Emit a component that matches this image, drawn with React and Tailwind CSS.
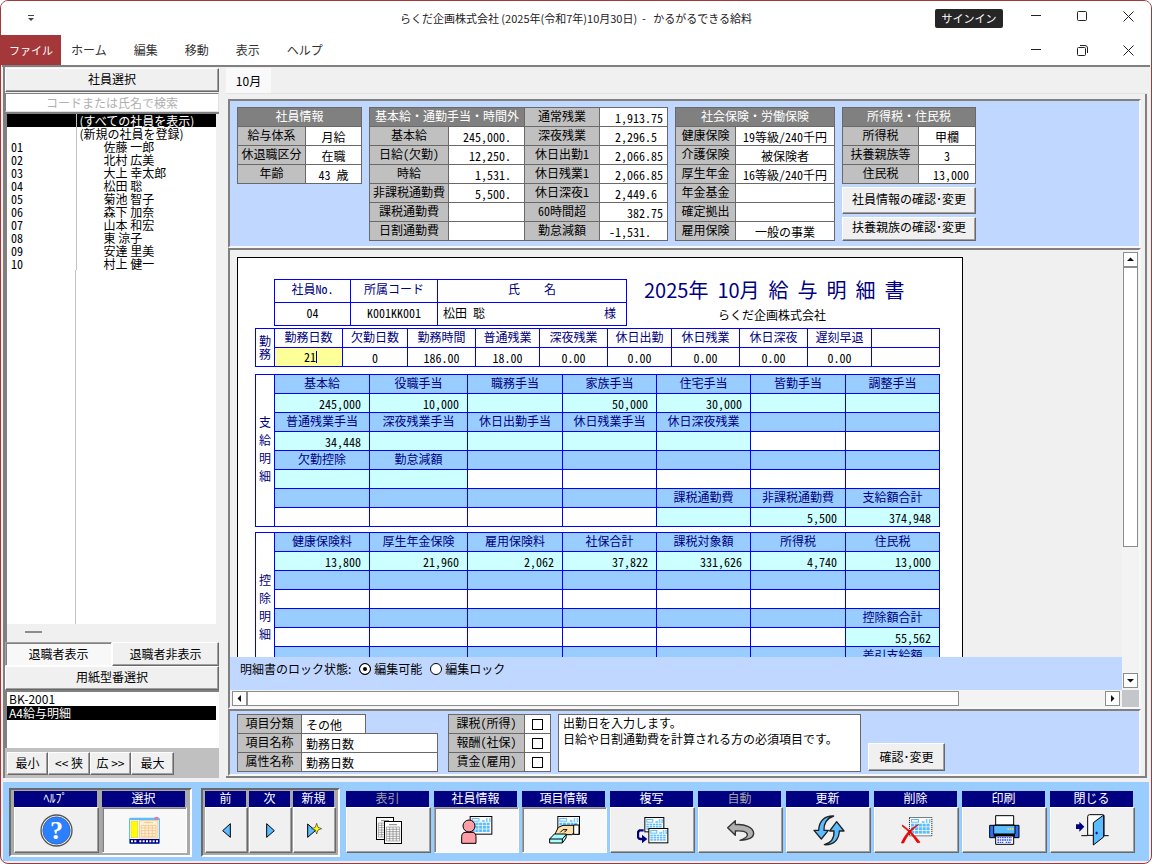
import { useState } from 'react';
import clsx from 'clsx';

/* ─── Shared edge styles ─────────────────────────────── */
const RAISED =
  'border border-t-white border-l-white border-b-[#696969] border-r-[#696969] shadow-[inset_-1px_-1px_0_#a0a0a0] bg-[#f0f0f0]';
const PRESSED =
  'border border-t-[#a0a0a0] border-l-[#a0a0a0] border-b-white border-r-white shadow-[inset_1px_1px_0_#808080] bg-[#f8f8f8]';
const SUNKEN =
  'border-2 border-t-[#808080] border-l-[#808080] border-b-[#f8f8f8] border-r-[#f8f8f8]';
const NUM = "font-['Noto_Sans_Mono_CJK_JP','Noto_Sans_CJK_JP',monospace] text-xs";

/* ─── Data ───────────────────────────────────────────── */
const menus = ['ホーム', '編集', '移動', '表示', 'ヘルプ'];

const employees = [
  ['01', '佐藤 一郎'],
  ['02', '北村 広美'],
  ['03', '大上 幸太郎'],
  ['04', '松田 聡'],
  ['05', '菊池 智子'],
  ['06', '森下 加奈'],
  ['07', '山本 和宏'],
  ['08', '東 涼子'],
  ['09', '安達 里美'],
  ['10', '村上 健一'],
];

const baseRows = [
  ['基本給', '245,000.', '深夜残業', '2,296.5', 'pr-2.5'],
  ['日給(欠勤)', '12,250.', '休日出勤1', '2,066.85', 'pr-1'],
  ['時給', '1,531.', '休日残業1', '2,066.85', 'pr-1'],
  ['非課税通勤費', '5,500.', '休日深夜1', '2,449.6', 'pr-2.5'],
  ['課税通勤費', '', '60時間超', '382.75', 'pr-1'],
  ['日割通勤費', '', '勤怠減額', '-1,531.', 'pr-4'],
];

const insuranceRows = [
  ['健康保険', '19等級/240千円'],
  ['介護保険', '被保険者'],
  ['厚生年金', '16等級/240千円'],
  ['年金基金', ''],
  ['確定拠出', ''],
  ['雇用保険', '一般の事業'],
];

const attendance = [
  ['勤務日数', '21'],
  ['欠勤日数', '0'],
  ['勤務時間', '186.00'],
  ['普通残業', '18.00'],
  ['深夜残業', '0.00'],
  ['休日出勤', '0.00'],
  ['休日残業', '0.00'],
  ['休日深夜', '0.00'],
  ['遅刻早退', '0.00'],
  ['', ''],
];

// fill: c = calculated cell, - = plain cell
const payments = [
  {
    heads: ['基本給', '役職手当', '職務手当', '家族手当', '住宅手当', '皆勤手当', '調整手当'],
    values: ['245,000', '10,000', '', '50,000', '30,000', '', ''],
    fill: 'ccccccc',
  },
  {
    heads: ['普通残業手当', '深夜残業手当', '休日出勤手当', '休日残業手当', '休日深夜残業', '', ''],
    values: ['34,448', '', '', '', '', '', ''],
    fill: 'ccccc--',
  },
  {
    heads: ['欠勤控除', '勤怠減額', '', '', '', '', ''],
    values: ['', '', '', '', '', '', ''],
    fill: 'cc-----',
  },
  {
    heads: ['', '', '', '', '課税通勤費', '非課税通勤費', '支給額合計'],
    values: ['', '', '', '', '', '5,500', '374,948'],
    fill: '----ccc',
  },
];

const deductions = [
  {
    heads: ['健康保険料', '厚生年金保険', '雇用保険料', '社保合計', '課税対象額', '所得税', '住民税'],
    values: ['13,800', '21,960', '2,062', '37,822', '331,626', '4,740', '13,000'],
    fill: 'ccccccc',
  },
  {
    heads: ['', '', '', '', '', '', ''],
    values: ['', '', '', '', '', '', ''],
    fill: '-------',
  },
  {
    heads: ['', '', '', '', '', '', '控除額合計'],
    values: ['', '', '', '', '', '', '55,562'],
    fill: '------c',
  },
  {
    heads: ['', '', '', '', '', '', '差引支給額'],
    values: ['', '', '', '', '', '', ''],
    fill: '------c',
  },
];

/* ─── Icons ──────────────────────────────────────────── */
function Sheet({ x = 0, y = 0, w = 68, h = 56, dashed = false }) {
  const cols = [0, 1, 2, 3, 4];
  const rows = [0, 1, 2];
  const cw = (w - 12) / 5;
  const ch = (h - 26) / 3;
  return (
    <g transform={`translate(${x} ${y})`}>
      <rect x="1.5" y="1.5" width={w - 3} height={h - 3} fill="#fff" stroke="#000" strokeWidth="3" strokeDasharray={dashed ? '3 3' : undefined} />
      <rect x="7.5" y="7.5" width={w * 0.3} height="8" fill="#fff" stroke="#5bbcff" strokeWidth="3" />
      <path d={`M${w * 0.55} 15h8M${w * 0.72} 9h5M${w * 0.72} 15h5M${w * 0.85} 9h5M${w * 0.85} 15h5`} stroke="#5bbcff" strokeWidth="4" />
      {rows.map((r) =>
        cols.map((c) => (
          <rect key={`${r}-${c}`} x={6 + c * cw} y={20 + r * ch} width={cw - 2} height={ch - 2} fill="#5bbcff" />
        ))
      )}
    </g>
  );
}

function HelpIcon() {
  return (
    <svg width="33" height="33" viewBox="0 0 96 96" aria-hidden="true">
      <circle cx="48" cy="48" r="45" fill="#fff" stroke="#555" strokeWidth="4" />
      <circle cx="48" cy="48" r="40" fill="#2a80ff" stroke="#3a5a90" strokeWidth="2" />
      <text x="48" y="74" textAnchor="middle" fontFamily="Liberation Serif" fontWeight="bold" fontSize="76" fill="#fff">
        ?
      </text>
    </svg>
  );
}

function SelectIcon() {
  return (
    <svg width="31" height="27" viewBox="0 0 93 81" aria-hidden="true">
      <rect x="0" y="2" width="93" height="79" rx="5" fill="#5bbcff" />
      <rect x="77" y="0" width="11" height="7" fill="#ff6f91" />
      <rect x="3" y="9" width="87" height="57" fill="#fff" />
      <rect x="6" y="12" width="20" height="50" fill="#ff0" stroke="#f0c860" strokeWidth="2" />
      <rect x="31" y="11" width="56" height="52" fill="#fff3e0" stroke="#f0c890" strokeWidth="3" />
      <path d="M46 17h26" stroke="#f5c58a" strokeWidth="3" />
      <path d="M37 25h44v33H37zM37 33h44M37 41h44M37 50h44M48 25v33M59 25v33M70 25v33" fill="none" stroke="#f7c98f" strokeWidth="3" />
      <rect x="2" y="66" width="89" height="14" fill="#000080" />
      <path d="M6 73h17M31 73h57" stroke="#fff" strokeWidth="6" strokeDasharray="6 4" />
    </svg>
  );
}

function PrevIcon() {
  return (
    <svg width="9" height="15" viewBox="0 0 27 45" aria-hidden="true">
      <path d="M25 2v41L2 23z" fill="#5bbcff" stroke="#000" strokeWidth="3" />
    </svg>
  );
}

function NextIcon() {
  return (
    <svg width="9" height="15" viewBox="0 0 27 45" aria-hidden="true">
      <path d="M2 2v41l23-20z" fill="#5bbcff" stroke="#000" strokeWidth="3" />
    </svg>
  );
}

function NewIcon() {
  return (
    <svg width="15" height="15" viewBox="0 0 45 45" aria-hidden="true">
      <path d="M2 3v40l23-20z" fill="#5bbcff" stroke="#000" strokeWidth="3" />
      <path d="M29 1l4 12 11 4-11 4-4 12-4-12-11-4 11-4z" fill="#ff0" stroke="#333" strokeWidth="2" />
    </svg>
  );
}

function TableIcon() {
  const page = (x, y) => (
    <g transform={`translate(${x} ${y})`}>
      <rect x="1.5" y="1.5" width="51" height="66" fill="#fff" stroke="#000" strokeWidth="3" />
      <path d="M15 11h24" stroke="#808080" strokeWidth="3" />
      <path d="M7 18h40v42H7zM7 25h40M7 32h40M7 39h40M7 46h40M7 53h40M17 18v42M27 18v42M37 18v42" fill="none" stroke="#808080" strokeWidth="2" />
    </g>
  );
  return (
    <svg width="26" height="27" viewBox="0 0 78 81" aria-hidden="true">
      {page(0, 0)}
      {page(24, 12)}
    </svg>
  );
}

function EmployeeIcon() {
  return (
    <svg width="32" height="28" viewBox="0 0 96 84" aria-hidden="true">
      <Sheet x={26} />
      <circle cx="24" cy="30" r="18" fill="#ff9da6" stroke="#000" strokeWidth="3" />
      <path d="M2 82V62q0-13 13-13h18q12 0 12 13v20z" fill="#ff9da6" stroke="#000" strokeWidth="3" />
    </svg>
  );
}

function ItemIcon() {
  return (
    <svg width="32" height="28" viewBox="0 0 96 84" aria-hidden="true">
      <Sheet x={25} />
      <path d="M20 50l8-16 14-6h34v22l-8 6H18z" fill="#ffdfa8" stroke="#000" strokeWidth="3" />
      <path d="M34 49l8-8h12l-8 8" fill="none" stroke="#000" strokeWidth="3" />
      <path d="M74 27h16v28H74z" fill="#fff" stroke="#000" strokeWidth="3" />
      <path d="M2 69l14-15h36l-1 12-11 15H2z" fill="#aff" stroke="#000" strokeWidth="3" />
      <path d="M2 69h38v12M40 69l12-14" fill="none" stroke="#000" strokeWidth="3" />
    </svg>
  );
}

function CopyIcon() {
  return (
    <svg width="32" height="27" viewBox="0 0 96 81" aria-hidden="true">
      <Sheet x={22} w={60} h={46} />
      <Sheet x={34} y={33} w={60} h={46} />
      <path d="M20 40H8q-5 2-5 9v11q1 6 7 6h6" fill="none" stroke="#000080" strokeWidth="7" />
      <path d="M15 53l16 13-16 13z" fill="#000080" />
    </svg>
  );
}

function UndoIcon() {
  return (
    <svg width="28" height="21" viewBox="0 0 84 63" aria-hidden="true">
      <path d="M2 23L25 2v12c28-3 54 8 55 26 0 13-17 20-41 21 14-5 23-10 22-17-1-9-17-13-36-11v13z" fill="#b0b0b0" stroke="#333" strokeWidth="4" strokeLinejoin="round" />
    </svg>
  );
}

function RefreshIcon() {
  return (
    <svg width="32" height="31" viewBox="0 0 96 93" aria-hidden="true">
      <path d="M62 3C35 2 18 17 17 46H3l22 26 21-26H33C32 25 42 10 62 3z" fill="#5bbcff" stroke="#222" strokeWidth="4" strokeLinejoin="round" />
      <path d="M34 89c27 2 44-14 45-41h14L71 20 50 48h13c1 20-9 36-29 41z" fill="#5bbcff" stroke="#222" strokeWidth="4" strokeLinejoin="round" />
    </svg>
  );
}

function DeleteIcon() {
  return (
    <svg width="32" height="27" viewBox="0 0 96 81" aria-hidden="true">
      <Sheet x={24} w={70} h={58} dashed />
      <path d="M4 24c19 13 38 31 53 52l-8 1C36 57 21 40 4 28zM53 23C35 35 19 54 8 78H1C11 54 29 32 53 23z" fill="#f00" stroke="#d00000" strokeWidth="2" strokeLinejoin="round" />
    </svg>
  );
}

function PrintIcon() {
  return (
    <svg width="31" height="30" viewBox="0 0 93 90" aria-hidden="true">
      <path d="M20 2h54v28H20z" fill="#fff" stroke="#000" strokeWidth="3" />
      <path d="M2 31h88v37H2z" fill="#2a6fff" stroke="#000" strokeWidth="3" />
      <path d="M14 31h64v26H14z" fill="#5bbcff" stroke="#000" strokeWidth="3" />
      <path d="M55 42h19" stroke="#ffe04a" strokeWidth="5" strokeDasharray="5 2" />
      <path d="M14 57h64v8H14z" fill="#000" />
      <path d="M20 63h54v25H20z" fill="#fff" stroke="#000" strokeWidth="3" />
      <path d="M25 68h44M25 75h44M25 82h18M50 82h16" stroke="#2a50ff" strokeWidth="4" strokeDasharray="5 2" />
    </svg>
  );
}

function CloseDoorIcon() {
  return (
    <svg width="33" height="32" viewBox="0 0 99 96" aria-hidden="true">
      <path d="M16 65h18M84 65h14" stroke="#000" strokeWidth="3" />
      <path d="M35 65V8q0-6 6-6h38q5 0 5 4v58H35z" fill="#fff" stroke="#000" strokeWidth="3" />
      <path d="M52 26L83 3v66L52 93z" fill="#5bbcff" stroke="#000" strokeWidth="3" />
      <path d="M58 57h8M62 53v8" stroke="#000080" strokeWidth="3" />
      <path d="M0 31h10V23l15 15-15 15v-8H0z" fill="#000080" />
    </svg>
  );
}

/* ─── Window chrome ──────────────────────────────────── */
function WindowButtons({ restore = false }) {
  return (
    <div className="flex gap-[35px] pr-[17px]">
      <button aria-label="最小化" className="flex size-[11px] items-center">
        <svg width="11" height="11" viewBox="0 0 11 11"><path d="M0 4.5h10" stroke="#222" /></svg>
      </button>
      <button aria-label="元のサイズ" className="size-[11px]">
        {restore ? (
          <svg width="11" height="11" viewBox="0 0 11 11" fill="none" stroke="#222">
            <rect x=".5" y="2.5" width="8" height="8" rx="1" />
            <path d="M3 .5h5q2.500 0 2.500 2.500V8" />
          </svg>
        ) : (
          <svg width="11" height="11" viewBox="0 0 11 11" fill="none" stroke="#222"><rect x=".5" y=".5" width="9" height="9" rx="1" /></svg>
        )}
      </button>
      <button aria-label="閉じる" className="size-[11px]">
        <svg width="11" height="11" viewBox="0 0 11 11" stroke="#222"><path d="M.5.5l10 10M10.500.5l-10 10" /></svg>
      </button>
    </div>
  );
}

function TitleBar() {
  return (
    <header className="shrink-0 bg-white">
      <div className="grid h-[34px] grid-cols-[1fr_auto_1fr] items-center">
        <div className="pl-[27px]">
          <button aria-label="クイックアクセス" className="block">
            <svg width="6" height="6" viewBox="0 0 6 6"><path d="M0 .5h6" stroke="#444" /><path d="M0 3h6L3 6z" fill="#444" /></svg>
          </button>
        </div>
        <h1 className="text-[11px] text-[#222]">らくだ企画株式会社 (2025年(令和7年)10月30日)&nbsp; -&nbsp; &nbsp;かるがるできる給料</h1>
        <div className="flex items-start justify-end gap-[28px]">
          <button className="h-[19px] w-[68px] rounded-xs bg-[#262626] text-[11px] leading-[17px] text-white">サインイン</button>
          <div className="pt-0.5">
            <WindowButtons />
          </div>
        </div>
      </div>
      <div className="flex h-[30px] items-center justify-between">
        <nav className="flex h-full items-center text-xs text-[#333]">
          <button className="h-full w-[60px] bg-[#a4373a] text-[11px] text-white">ファイル</button>
          <div className="flex gap-[27px] pl-2.5">
            {menus.map((m) => (
              <button key={m} className="text-xs">
                {m}
              </button>
            ))}
          </div>
        </nav>
        <WindowButtons restore />
      </div>
    </header>
  );
}

/* ─── Left side ──────────────────────────────────────── */
function Sidebar() {
  const [query, setQuery] = useState('');
  return (
    <aside className="flex w-[216px] shrink-0 flex-col border-l-2 border-[#808080]">
      <h2 className={clsx(RAISED, 'mt-px h-6 shrink-0 text-center text-xs leading-[20px]')}>社員選択</h2>
      <input
        aria-label="社員検索"
        value={query}
        onChange={(e) => setQuery(e.target.value)}
        placeholder="コードまたは氏名で検索"
        className="mt-px h-[19px] shrink-0 border border-[#808080] border-r-[#e0e0e0] border-b-[#e0e0e0] bg-white text-center text-xs leading-4 placeholder:text-[#b0b0b0]"
      />
      <div className="flex min-h-0 flex-1 flex-col border-t-2 border-l-2 border-[#808080] pr-[3px]">
        <table className="w-full table-fixed bg-white text-xs leading-[13px]">
          <colgroup>
            <col className="w-[69px]" />
            <col />
          </colgroup>
          <tbody>
            <tr className="bg-black text-white">
              <td className="h-[13px] border-r border-[#c0c0c0]" />
              <td className="h-[13px] pl-[3px]">(すべての社員を表示)</td>
            </tr>
            <tr>
              <td className="h-[13px] border-r border-[#c0c0c0]" />
              <td className="h-[13px] pl-[3px]">(新規の社員を登録)</td>
            </tr>
            {employees.map(([code, name]) => (
              <tr key={code}>
                <td className={clsx(NUM, 'h-[13px] border-r border-[#c0c0c0] pl-1 leading-[13px]')}>{code}</td>
                <td className="h-[13px] pl-[27px]">{name}</td>
              </tr>
            ))}
          </tbody>
        </table>
        <div className="flex-1 bg-white">
          <div className="h-full w-[69px] border-r border-[#c0c0c0]" />
        </div>
        <div className="h-[18px] shrink-0 px-[18px] pt-[7px]">
          <div className="h-0.5 w-[17px] bg-[#8c8c8c]" />
        </div>
      </div>
      <div className="flex shrink-0 text-xs leading-[20px]">
        <button className={clsx(PRESSED, 'h-6 flex-1')}>退職者表示</button>
        <button className={clsx(RAISED, 'h-6 flex-1')}>退職者非表示</button>
      </div>
      <h2 className={clsx(RAISED, 'h-6 shrink-0 text-center text-xs leading-[20px]')}>用紙型番選択</h2>
      <ul className="h-[58px] shrink-0 border-t-2 border-l-2 border-[#808080] bg-white pr-[3px] text-xs leading-[14px]">
        <li className="pl-0.5">BK-2001</li>
        <li className="bg-black pl-0.5 text-white">A4給与明細</li>
      </ul>
      <div className="flex h-[30px] shrink-0 items-center bg-[#c0c0c0] pl-0.5 text-xs">
        <button className={clsx(RAISED, 'h-[23px] w-[41px]')}>最小</button>
        <button className={clsx(RAISED, 'h-[23px] w-[42px]')}>&lt;&lt; 狭</button>
        <button className={clsx(RAISED, 'h-[23px] w-[41px]')}>広 &gt;&gt;</button>
        <button className={clsx(RAISED, 'h-[23px] w-[43px]')}>最大</button>
      </div>
    </aside>
  );
}

/* ─── Employee summary ───────────────────────────────── */
const cell = 'h-[19px] border border-[#696969] p-0 leading-[17px] whitespace-nowrap';
const label =
  "h-[19px] border border-[#696969] bg-[#c0c0c0] p-0 pb-0.5 leading-[16px] text-center font-normal whitespace-nowrap font-['Noto_Sans_Mono_CJK_JP','Noto_Sans_CJK_JP',monospace]";
const headCell =
  'h-[19px] border border-[#696969] bg-[#808080] p-0 pb-0.5 leading-[16px] text-center font-normal text-white whitespace-nowrap';

function SummaryPanel() {
  return (
    <section className={clsx(SUNKEN, 'flex h-[149px] shrink-0 items-start gap-[7px] bg-[#c0d7ff] pt-1.5 pl-[7px] text-xs')}>
      <table className="w-[125px] table-fixed border-collapse bg-white">
        <colgroup>
          <col className="w-[68px]" />
          <col className="w-[56px]" />
        </colgroup>
        <tbody>
          <tr><th colSpan={2} className={headCell}>社員情報</th></tr>
          <tr><th className={label}>給与体系</th><td className={clsx(cell, 'text-center')}>月給</td></tr>
          <tr><th className={label}>休退職区分</th><td className={clsx(cell, 'text-center')}>在職</td></tr>
          <tr><th className={label}>年齢</th><td className={clsx(cell, NUM, 'text-center')}>43 歳</td></tr>
        </tbody>
      </table>

      <table className="w-[299px] table-fixed border-collapse bg-white">
        <colgroup>
          <col className="w-[79px]" />
          <col className="w-[76px]" />
          <col className="w-[75px]" />
          <col className="w-[68px]" />
        </colgroup>
        <tbody>
          <tr>
            <th colSpan={2} className={headCell}>基本給・通勤手当・時間外</th>
            <th className={label}>通常残業</th>
            <td className={clsx(cell, NUM, 'text-right')}><span className="pr-1">1,913.75</span></td>
          </tr>
          {baseRows.map(([name, value, name2, value2, pad]) => (
            <tr key={name}>
              <th className={label}>{name}</th>
              <td className={clsx(cell, NUM, 'text-right')}><span className="pr-[13px]">{value}</span></td>
              <th className={label}>{name2}</th>
              <td className={clsx(cell, NUM, 'text-right')}><span className={pad}>{value2}</span></td>
            </tr>
          ))}
        </tbody>
      </table>

      <table className="w-[160px] table-fixed border-collapse bg-white">
        <colgroup>
          <col className="w-[60px]" />
          <col className="w-[99px]" />
        </colgroup>
        <tbody>
          <tr><th colSpan={2} className={headCell}>社会保険・労働保険</th></tr>
          {insuranceRows.map(([name, value]) => (
            <tr key={name}>
              <th className={label}>{name}</th>
              <td className={clsx(cell, NUM, 'text-center')}>{value}</td>
            </tr>
          ))}
        </tbody>
      </table>

      <div className="flex w-[134px] flex-col gap-[3px]">
        <table className="w-full table-fixed border-collapse bg-white">
          <colgroup>
            <col className="w-[76px]" />
            <col className="w-[57px]" />
          </colgroup>
          <tbody>
            <tr><th colSpan={2} className={headCell}>所得税・住民税</th></tr>
            <tr><th className={label}>所得税</th><td className={clsx(cell, 'text-center')}>甲欄</td></tr>
            <tr><th className={label}>扶養親族等</th><td className={clsx(cell, NUM, 'text-center')}>3</td></tr>
            <tr><th className={label}>住民税</th><td className={clsx(cell, NUM, 'text-right')}><span className="pr-1.5">13,000</span></td></tr>
          </tbody>
        </table>
        <button className={clsx(RAISED, 'h-[27px] pb-1')}>社員情報の確認･変更</button>
        <button className={clsx(RAISED, 'h-[24px] pb-1')}>扶養親族の確認･変更</button>
      </div>
    </section>
  );
}

/* ─── Pay slip ───────────────────────────────────────── */
const slip = 'h-[19px] border border-[#0000ff] p-0 leading-[17px] whitespace-nowrap';
const slipHead =
  'h-[19px] border border-[#0000ff] p-0 pb-0.5 leading-[16px] font-normal text-[#000080] whitespace-nowrap';

function SlipTable({ title, blocks }) {
  return (
    <table className="w-[685px] table-fixed border-collapse">
      <colgroup>
        <col className="w-[19px]" />
        <col className="w-[95px]" />
        <col className="w-[98px]" />
        <col className="w-[95px]" />
        <col className="w-[94px]" />
        <col className="w-[94px]" />
        <col className="w-[95px]" />
        <col className="w-[94px]" />
      </colgroup>
      <tbody>
        {blocks.map((block, b) => [
          <tr key={`h${b}`}>
            {b === 0 && (
              <th rowSpan={blocks.length * 2} className="border border-[#0000ff] p-0 pb-1 leading-[18px] font-normal text-[#000080]">
                {title.split('').map((ch, i) => (
                  <span key={i} className="block">{ch}</span>
                ))}
              </th>
            )}
            {block.heads.map((h, i) => (
              <th key={i} className={clsx(slipHead, 'bg-[#99ccff]')}>{h}</th>
            ))}
          </tr>,
          <tr key={`v${b}`}>
            {block.values.map((v, i) => (
              <td key={i} className={clsx(slip, NUM, 'text-right', block.fill[i] === 'c' && 'bg-[#ccffff]')}>
                <span className="pr-2">{v}</span>
              </td>
            ))}
          </tr>,
        ])}
      </tbody>
    </table>
  );
}

function PaySlip() {
  return (
    <div className="mt-[7px] ml-[7px] w-[726px] border border-black bg-white pt-[21px] pb-5 pl-[17px] text-xs">
      <div className="flex pl-[19px]">
        <table className="w-[353px] table-fixed border-collapse">
          <colgroup>
            <col className="w-[76px]" />
            <col className="w-[87px]" />
            <col className="w-[189px]" />
          </colgroup>
          <tbody>
            <tr className={clsx(NUM, 'text-[#000080]')}>
              <th className="h-[23px] border border-[#0000ff] p-0 pb-1 font-normal">社員No.</th>
              <th className="h-[23px] border border-[#0000ff] p-0 pb-1 font-normal">所属コード</th>
              <th className="h-[23px] border border-[#0000ff] p-0 pb-1 font-normal">氏　　名</th>
            </tr>
            <tr className={NUM}>
              <td className="h-[23px] border border-[#0000ff] p-0 pb-0.5 text-center">04</td>
              <td className="h-[23px] border border-[#0000ff] p-0 pb-0.5 text-center">K001KK001</td>
              <td className="h-[23px] border border-[#0000ff] p-0 pb-0.5">
                <div className="flex justify-between pr-2.5 pl-[5px]">
                  <span>松田 聡</span>
                  <span className="text-[#000080]">様</span>
                </div>
              </td>
            </tr>
          </tbody>
        </table>
        <div className="flex-1 pl-[17px]">
          <h2 className="flex gap-[9px] text-xl leading-[22px] text-[#000080]">
            <span>2025年</span>
            <span>10月</span>
            <span>給</span>
            <span>与</span>
            <span>明</span>
            <span>細</span>
            <span>書</span>
          </h2>
          <p className="w-[256px] pt-[5px] text-center leading-[18px]">らくだ企画株式会社</p>
        </div>
      </div>

      <table className="mt-0.5 w-[685px] table-fixed border-collapse">
        <colgroup>
          <col className="w-[19px]" />
          <col className="w-[68px]" />
          <col className="w-[65px]" />
          <col className="w-[68px]" />
          <col className="w-[64px]" />
          <col className="w-[68px]" />
          <col className="w-[64px]" />
          <col className="w-[68px]" />
          <col className="w-[68px]" />
          <col className="w-[64px]" />
          <col className="w-[68px]" />
        </colgroup>
        <tbody>
          <tr>
            <th rowSpan={2} className="border border-[#0000ff] p-0 pb-0.5 leading-[13px] font-normal text-[#000080]">
              <span className="block">勤</span>
              <span className="block">務</span>
            </th>
            {attendance.map(([h], i) => (
              <th key={i} className={slipHead}>{h}</th>
            ))}
          </tr>
          <tr>
            {attendance.map(([h, v], i) =>
              i === 0 ? (
                <td key={i} className={clsx(slip, 'bg-[#ffff99]')}>
                  <div className="flex items-center justify-center">
                    <input aria-label={h} defaultValue={v} className={clsx(NUM, 'h-[15px] w-4 text-right outline-none')} />
                    <span className="h-3 w-px bg-[#000080]" />
                  </div>
                </td>
              ) : (
                <td key={i} className={clsx(slip, NUM, 'text-center')}>{v}</td>
              )
            )}
          </tr>
        </tbody>
      </table>
      <div className="mt-[7px]">
        <SlipTable title="支給明細" blocks={payments} />
      </div>
      <div className="mt-[5px]">
        <SlipTable title="控除明細" blocks={deductions} />
      </div>
    </div>
  );
}

function ScrollButton({ d, name }) {
  return (
    <button aria-label={name} className="flex size-[15px] shrink-0 items-center justify-center border border-[#8c8c8c] bg-white">
      <svg width="7" height="7" viewBox="0 0 7 7"><path d={d} fill="#111" /></svg>
    </button>
  );
}

function DocumentPanel() {
  const [lock, setLock] = useState('edit');
  return (
    <section className={clsx(SUNKEN, 'flex min-h-0 flex-1 flex-col')}>
      <div className="flex min-h-0 flex-1">
        <div className="flex min-w-0 flex-1 flex-col">
          <div className="min-h-0 flex-1 overflow-hidden">
            <PaySlip />
          </div>
          <fieldset className="flex h-[33px] shrink-0 items-start gap-2 bg-[#c0d7ff] pt-[3px] pl-2.5 text-xs leading-[18px]">
            <legend className="float-left">明細書のロック状態:</legend>
            {[
              ['edit', '編集可能'],
              ['lock', '編集ロック'],
            ].map(([id, text]) => (
              <label key={id} className="flex items-center gap-[3px]">
                <input
                  type="radio"
                  name="lock"
                  checked={lock === id}
                  onChange={() => setLock(id)}
                  className="size-3 appearance-none rounded-full border border-black bg-white checked:bg-black checked:shadow-[inset_0_0_0_3px_#fff]"
                />
                {text}
              </label>
            ))}
          </fieldset>
        </div>
        <div className="flex w-[17px] shrink-0 flex-col items-center bg-[#f3f3f3] pt-0.5 pb-0.5">
          <ScrollButton name="上へ" d="M0 5h7L3.500 1.500z" />
          <div className="min-h-0 w-[15px] flex-1">
            <div className="h-[69%] border border-[#8c8c8c] bg-white" />
          </div>
          <ScrollButton name="下へ" d="M0 2h7L3.500 5.500z" />
        </div>
      </div>
      <div className="flex h-[17px] shrink-0">
        <div className="flex min-w-0 flex-1 items-center bg-[#f3f3f3] px-0.5">
          <ScrollButton name="左へ" d="M5 0v7L1.500 3.500z" />
          <div className="h-[15px] min-w-0 flex-1">
            <div className="h-full w-[83%] border border-[#8c8c8c] bg-white" />
          </div>
          <ScrollButton name="右へ" d="M2 0v7l3.500-3.500z" />
        </div>
        <div className="w-[17px] bg-[#c4c6ca]" />
      </div>
    </section>
  );
}

/* ─── Item details ───────────────────────────────────── */
function ItemPanel() {
  const fields = [
    { name: '項目分類', value: 'その他', width: 'w-[65px]' },
    { name: '項目名称', value: '勤務日数', width: 'w-[137px]' },
    { name: '属性名称', value: '勤務日数', width: 'w-[137px]' },
  ];
  return (
    <section className={clsx(SUNKEN, 'flex h-[67px] shrink-0 items-start bg-[#c0d7ff] pt-[3px] pl-[7px] text-xs')}>
      <div className="flex w-[202px] flex-col pt-px">
        {fields.map((f) => (
          <label key={f.name} className="-mt-px flex">
            <span className="h-5 w-[65px] border border-[#696969] bg-[#c0c0c0] text-center leading-[16px]">{f.name}</span>
            <input defaultValue={f.value} className={clsx('-ml-px h-5 border border-[#696969] bg-white px-1', f.width)} />
          </label>
        ))}
      </div>
      <table className="ml-[9px] w-[103px] table-fixed border-collapse bg-white">
        <colgroup>
          <col className="w-[76px]" />
          <col className="w-[26px]" />
        </colgroup>
        <tbody>
          {['課税(所得)', '報酬(社保)', '賃金(雇用)'].map((t, i) => (
            <tr key={t}>
              <th className={label}><label htmlFor={`tax${i}`}>{t}</label></th>
              <td className={cell}>
                <input id={`tax${i}`} type="checkbox" className="mx-auto block size-[11px] appearance-none border border-black bg-white checked:bg-black" />
              </td>
            </tr>
          ))}
        </tbody>
      </table>
      <textarea
        aria-label="項目の説明"
        className="ml-[7px] h-[58px] w-[303px] resize-none border border-[#696969] bg-white px-1 text-xs leading-4"
        defaultValue={'出勤日を入力します。\n日給や日割通勤費を計算される方の必須項目です。'}
      />
      <button className={clsx(RAISED, 'mb-[3px] ml-[7px] h-7 w-[77px] self-end')}>確認･変更</button>
    </section>
  );
}

/* ─── Bottom toolbar ─────────────────────────────────── */
function Tool({ text, icon: Icon, width = 'w-[85px]', pressed = false, disabled = false }) {
  return (
    <button disabled={disabled} className={clsx('flex h-[62px] flex-col', width)}>
      <span className={clsx('mr-0.5 block h-4 self-stretch bg-[#000080] text-xs leading-[14px]', disabled ? 'text-[#a0a0a0]' : 'text-white')}>
        {text}
      </span>
      <span className={clsx(pressed ? PRESSED : RAISED, 'flex w-full flex-1 items-center justify-center')}>
        <Icon />
      </span>
    </button>
  );
}

function Toolbar() {
  const group = 'border-2 border-t-[#696969] border-l-[#696969] border-b-white border-r-white bg-[#a9a9a9]';
  return (
    <footer className="mx-0.5 flex h-[79px] shrink-0 items-start bg-[#99ccff] pt-1.5 pl-1.5">
      <div className={clsx(group, 'flex h-[69px] gap-[3px] px-[3px] pt-px')}>
        <Tool text="ﾍﾙﾌﾟ" icon={HelpIcon} />
        <Tool text="選択" icon={SelectIcon} pressed />
      </div>
      <div className={clsx(group, 'ml-[9px] flex h-[69px] gap-px px-0.5 pt-px')}>
        <Tool text="前" icon={PrevIcon} width="w-[43px]" />
        <Tool text="次" icon={NextIcon} width="w-[43px]" />
        <Tool text="新規" icon={NewIcon} width="w-[43px]" />
      </div>
      <div className="ml-1.5 flex gap-[3px] pt-[3px]">
        <Tool text="表引" icon={TableIcon} disabled />
        <Tool text="社員情報" icon={EmployeeIcon} pressed />
        <Tool text="項目情報" icon={ItemIcon} pressed />
        <Tool text="複写" icon={CopyIcon} />
        <Tool text="自動" icon={UndoIcon} disabled />
        <Tool text="更新" icon={RefreshIcon} />
        <Tool text="削除" icon={DeleteIcon} />
        <Tool text="印刷" icon={PrintIcon} />
        <Tool text="閉じる" icon={CloseDoorIcon} />
      </div>
    </footer>
  );
}

export default function App() {
  return (
    <div className="flex h-screen flex-col overflow-hidden rounded-lg border border-[#a4373a] bg-[#f0f0f0] pb-0.5 font-['Noto_Sans_CJK_JP',sans-serif] text-black">
      <TitleBar />
      <main className="mx-px flex min-h-0 flex-1 gap-[7px] border-t-2 border-[#808080] pb-1 pl-px">
        <Sidebar />
        <div className="flex min-w-0 flex-1 flex-col pr-[3px]">
          <div className="flex h-[27px] shrink-0 items-end border-b border-[#e3e3e3]">
            <button className="h-[25px] w-[45px] bg-[#f9f9f9] text-xs">10月</button>
          </div>
          <div className="flex min-h-0 flex-1 flex-col border-r-2 border-b-2 border-[#808080] pt-[5px] pr-1 pl-0.5">
            <SummaryPanel />
            <DocumentPanel />
            <ItemPanel />
          </div>
        </div>
      </main>
      <Toolbar />
    </div>
  );
}
